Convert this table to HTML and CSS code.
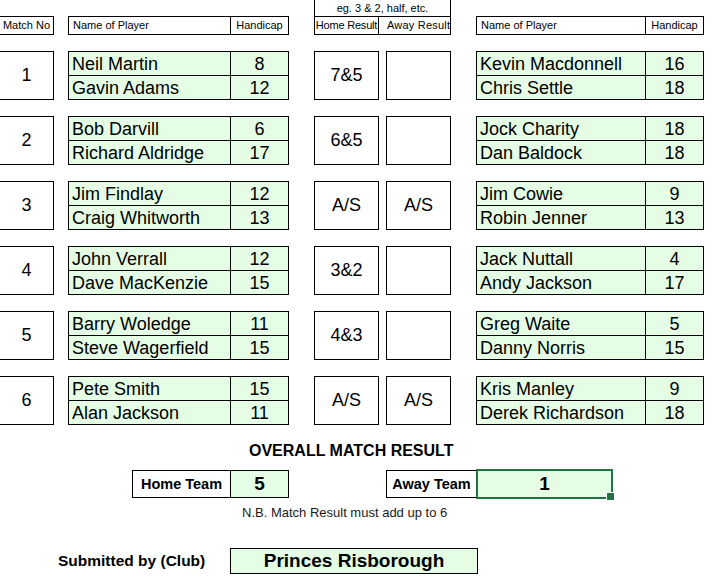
FILE: index.html
```html
<!DOCTYPE html>
<html>
<head>
<meta charset="utf-8">
<link rel="stylesheet" href="styles.css">
</head>
<body>
<div class="sheet">
  <div class="head">
    <div class="match-h">Match No</div>
    <div class="players-h">
      <div class="hc-name">Name of Player</div>
      <div class="hc-hcp">Handicap</div>
    </div>
    <div class="results-h">
      <div class="eg">eg. 3 &amp; 2, half, etc.</div>
      <div class="res-h">
        <div class="hc-home">Home Result</div>
        <div class="hc-away">Away Result</div>
      </div>
    </div>
    <div class="players-h away">
      <div class="hc-name">Name of Player</div>
      <div class="hc-hcp">Handicap</div>
    </div>
  </div>

  <div class="row">
    <div class="match">1</div>
    <div class="players"><div class="nm">Neil Martin</div><div class="hp">8</div><div class="nm b">Gavin Adams</div><div class="hp b">12</div></div>
    <div class="results"><div class="res">7&amp;5</div><div class="res"></div></div>
    <div class="players away"><div class="nm">Kevin Macdonnell</div><div class="hp">16</div><div class="nm b">Chris Settle</div><div class="hp b">18</div></div>
  </div>
  <div class="row">
    <div class="match">2</div>
    <div class="players"><div class="nm">Bob Darvill</div><div class="hp">6</div><div class="nm b">Richard Aldridge</div><div class="hp b">17</div></div>
    <div class="results"><div class="res">6&amp;5</div><div class="res"></div></div>
    <div class="players away"><div class="nm">Jock Charity</div><div class="hp">18</div><div class="nm b">Dan Baldock</div><div class="hp b">18</div></div>
  </div>
  <div class="row">
    <div class="match">3</div>
    <div class="players"><div class="nm">Jim Findlay</div><div class="hp">12</div><div class="nm b">Craig Whitworth</div><div class="hp b">13</div></div>
    <div class="results"><div class="res">A/S</div><div class="res">A/S</div></div>
    <div class="players away"><div class="nm">Jim Cowie</div><div class="hp">9</div><div class="nm b">Robin Jenner</div><div class="hp b">13</div></div>
  </div>
  <div class="row">
    <div class="match">4</div>
    <div class="players"><div class="nm">John Verrall</div><div class="hp">12</div><div class="nm b">Dave MacKenzie</div><div class="hp b">15</div></div>
    <div class="results"><div class="res">3&amp;2</div><div class="res"></div></div>
    <div class="players away"><div class="nm">Jack Nuttall</div><div class="hp">4</div><div class="nm b">Andy Jackson</div><div class="hp b">17</div></div>
  </div>
  <div class="row">
    <div class="match">5</div>
    <div class="players"><div class="nm">Barry Woledge</div><div class="hp">11</div><div class="nm b">Steve Wagerfield</div><div class="hp b">15</div></div>
    <div class="results"><div class="res">4&amp;3</div><div class="res"></div></div>
    <div class="players away"><div class="nm">Greg Waite</div><div class="hp">5</div><div class="nm b">Danny Norris</div><div class="hp b">15</div></div>
  </div>
  <div class="row">
    <div class="match">6</div>
    <div class="players"><div class="nm">Pete Smith</div><div class="hp">15</div><div class="nm b">Alan Jackson</div><div class="hp b">11</div></div>
    <div class="results"><div class="res">A/S</div><div class="res">A/S</div></div>
    <div class="players away"><div class="nm">Kris Manley</div><div class="hp">9</div><div class="nm b">Derek Richardson</div><div class="hp b">18</div></div>
  </div>

  <div class="overall">OVERALL MATCH RESULT</div>
  <div class="teams">
    <div class="team-home">
      <div class="t-label">Home Team</div>
      <div class="t-val">5</div>
    </div>
    <div class="team-away">
      <div class="t-label">Away Team</div>
      <div class="t-val sel">1</div>
    </div>
  </div>
  <div class="note">N.B. Match Result must add up to 6</div>
  <div class="submit">
    <div class="s-label">Submitted by (Club)</div>
    <div class="s-box">Princes Risborough</div>
  </div>
</div>
</body>
</html>
```

FILE: styles.css
```css
html, body {
  margin: 0;
  padding: 0;
  background: #fff;
}
body {
  font-family: "Liberation Sans", Arial, sans-serif;
  color: #000;
  width: 717px;
  height: 587px;
  overflow: hidden;
}
.sheet {
  width: 717px;
}
* { box-sizing: border-box; }

/* header */
.head {
  display: flex;
  align-items: flex-end;
  height: 35px;
  font-size: 11px;
}
.match-h {
  width: 54px;
  height: 19px;
  border: 1px solid #000;
  border-left: none;
  line-height: 17px;
  text-align: center;
  white-space: nowrap;
}
.players-h {
  width: 221px;
  height: 19px;
  margin-left: 14px;
  border: 1px solid #000;
  display: grid;
  grid-template-columns: 162px 57px;
  line-height: 17px;
}
.players-h.away {
  width: 228px;
  margin-left: 25px;
  grid-template-columns: 169px 57px;
}
.hc-name {
  border-right: 1px solid #000;
  padding-left: 4px;
  white-space: nowrap;
}
.hc-hcp {
  text-align: center;
}
.results-h {
  width: 137px;
  margin-left: 25px;
  display: flex;
  flex-direction: column;
}
.eg {
  height: 16px;
  border-left: 1px solid #000;
  border-right: 1px solid #000;
  line-height: 16px;
  text-align: center;
  white-space: nowrap;
}
.res-h {
  height: 19px;
  border: 1px solid #000;
  display: grid;
  grid-template-columns: 64px 71px;
  line-height: 17px;
}
.hc-home {
  border-right: 1px solid #000;
  text-align: center;
  white-space: nowrap;
  overflow: hidden;
  letter-spacing: -0.2px;
}
.hc-away {
  padding-left: 8px;
  white-space: nowrap;
  overflow: hidden;
  letter-spacing: 0.2px;
}

/* data rows */
.row {
  display: flex;
  align-items: flex-start;
  margin-top: 16px;
  font-size: 18px;
}
.match {
  width: 54px;
  height: 49px;
  border: 1px solid #000;
  border-left: none;
  line-height: 47px;
  text-align: center;
}
.players {
  width: 221px;
  height: 49px;
  margin-left: 14px;
  border: 1px solid #000;
  background: #e5fde5;
  display: grid;
  grid-template-columns: 162px 57px;
  grid-template-rows: 23px 24px;
}
.players.away {
  width: 228px;
  margin-left: 25px;
  grid-template-columns: 169px 57px;
}
.nm {
  border-right: 1px solid #000;
  padding-left: 3px;
  line-height: 24px;
  white-space: nowrap;
  overflow: hidden;
}
.hp {
  text-align: center;
  line-height: 24px;
  overflow: hidden;
}
.nm.b, .hp.b {
  border-top: 1px solid #000;
  line-height: 24px;
}
.results {
  width: 137px;
  margin-left: 25px;
  display: flex;
  gap: 7px;
}
.res {
  width: 65px;
  height: 49px;
  border: 1px solid #000;
  line-height: 47px;
  text-align: center;
}

/* summary */
.overall {
  margin-top: 16px;
  padding-left: 249px;
  font-weight: bold;
  font-size: 16px;
  line-height: 20px;
}
.teams {
  display: flex;
  align-items: flex-start;
  height: 28px;
  margin-top: 9px;
  padding-left: 132px;
  font-weight: bold;
}
.team-home {
  width: 157px;
  height: 28px;
  border: 1px solid #000;
  display: flex;
}
.team-home .t-label {
  width: 98px;
  border-right: 1px solid #000;
}
.t-label {
  font-size: 14.5px;
  line-height: 26px;
  text-align: center;
  white-space: nowrap;
}
.t-val {
  flex: 1;
  background: #e5fde5;
  font-size: 19px;
  line-height: 26px;
  text-align: center;
}
.team-away {
  margin-left: 97px;
  display: flex;
  align-items: flex-start;
}
.team-away .t-label {
  width: 90px;
  height: 28px;
  border: 1px solid #000;
  border-right: none;
}
.t-val.sel {
  flex: none;
  width: 137px;
  height: 30px;
  margin-top: -1px;
  border: 2px solid #217346;
  position: relative;
}
.t-val.sel::after {
  content: "";
  position: absolute;
  right: -4px;
  bottom: -4px;
  width: 7px;
  height: 7px;
  background: #217346;
  border: 1px solid #fff;
}
.note {
  margin-top: 7px;
  padding-left: 242px;
  font-size: 13px;
  line-height: 16px;
  color: #1a1a1a;
}
.submit {
  display: flex;
  margin-top: 27px;
  padding-left: 58px;
  font-weight: bold;
}
.s-label {
  width: 172px;
  font-size: 15.5px;
  line-height: 26px;
  white-space: nowrap;
}
.s-box {
  width: 248px;
  height: 26px;
  border: 1px solid #000;
  background: #e5fde5;
  font-size: 19px;
  line-height: 24px;
  text-align: center;
}
```
